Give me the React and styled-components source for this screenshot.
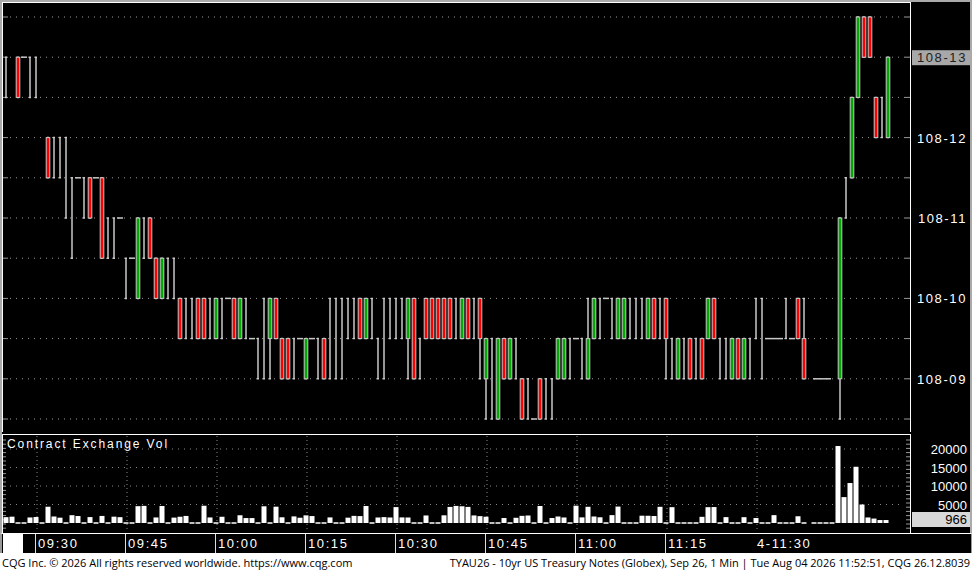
import React from "react";
import styled, { createGlobalStyle } from "styled-components";

const Global = createGlobalStyle`
  html, body { margin: 0; padding: 0; background: #fff; }
  body { width: 972px; height: 571px; overflow: hidden; font-family: "Liberation Sans", Arial, sans-serif; }
`;

const Frame = styled.div`
  width: 972px;
  height: 571px;
  display: flex;
  flex-direction: column;
`;

const Panel = styled.svg`
  display: block;
  flex: none;
`;

const TimeRow = styled.div`
  height: 20px;
  background: #000;
  display: flex;
  align-items: stretch;
  border-left: 2px solid #999;
  border-right: 1px solid #999;
  border-top: 1px solid #fff;
  box-sizing: border-box;
`;

const Square = styled.div`
  width: 20px;
  margin-left: 1px;
  background: #fff;
`;

const Spacer = styled.div`
  width: ${(p) => p.w}px;
`;

const TimeCell = styled.div`
  width: 90px;
  box-sizing: border-box;
  border-left: ${(p) => (p.plain ? "none" : "1px solid #ddd")};
  padding-left: 2px;
  color: #fff;
  font-size: 13px;
  letter-spacing: 1.6px;
  line-height: 20px;
`;

const Footer = styled.div`
  flex: 1;
  display: flex;
  justify-content: space-between;
  align-items: center;
  padding: 0 2px 0 2px;
  font-family: "Open Sans", "Liberation Sans", sans-serif;
  font-size: 11px;
  color: #000;
`;

const Y = (L) => 17 + L * 40.2;
const GREY = "#c8c8c8";

// [x, wickTop, wickBot, type, bodyTop, bodyBot]
const B = [
  [6, 1, 2, "w"], [18, 1, 2, "r"], [24, 1, 1, "d"], [30, 1, 2, "w"], [36, 1, 2, "w"],
  [48, 3, 4, "r"], [54, 3, 4, "w"], [60, 3, 4, "w"], [66, 3, 5, "w"], [72, 4, 6, "w"],
  [78, 4, 4, "d"], [84, 4, 5, "w"], [90, 4, 5, "r"], [96, 4, 4, "d"], [102, 4, 6, "r"],
  [108, 5, 6, "w"], [114, 5, 6, "w"], [120, 5, 5, "d"], [126, 6, 7, "w"], [132, 6, 6, "d"],
  [138, 5, 7, "g"], [144, 5, 6, "w"], [150, 5, 6, "r"], [156, 6, 7, "r"], [162, 6, 7, "g"],
  [168, 6, 7, "w"], [174, 6, 7, "w"], [180, 7, 8, "r"], [186, 7, 8, "w"], [192, 7, 8, "w"],
  [198, 7, 8, "r"], [204, 7, 8, "r"], [210, 7, 8, "w"], [216, 7, 8, "g"], [222, 7, 8, "w"],
  [228, 7, 7, "d"], [234, 7, 8, "r"], [240, 7, 8, "g"], [246, 7, 8, "w"], [252, 8, 8, "d"],
  [258, 8, 9, "w"], [264, 7, 9, "w"], [270, 7, 9, "g", 7, 8], [276, 7, 8, "r"], [282, 8, 9, "r"],
  [288, 8, 9, "r"], [294, 8, 9, "w"], [300, 8, 8, "d"], [306, 8, 9, "g"], [312, 8, 8, "d"],
  [318, 8, 9, "w"], [324, 8, 9, "r"], [330, 7, 9, "w"], [336, 7, 9, "w"], [342, 7, 9, "w"],
  [348, 7, 8, "w"], [354, 7, 8, "w"], [360, 7, 8, "r"], [366, 7, 8, "g"], [372, 7, 8, "w"],
  [378, 8, 9, "w"], [384, 7, 9, "w"], [390, 7, 8, "w"], [396, 7, 8, "w"], [402, 7, 8, "w"],
  [408, 7, 9, "g", 7, 8], [414, 7, 9, "r"], [420, 8, 9, "w"], [426, 7, 8, "r"], [432, 7, 8, "r"],
  [438, 7, 8, "r"], [444, 7, 8, "r"], [450, 7, 8, "r"], [456, 7, 8, "w"], [462, 7, 8, "g"],
  [468, 7, 8, "r"], [474, 7, 8, "w"], [480, 7, 9, "r", 7, 8], [486, 8, 10, "g", 8, 9], [492, 8, 10, "w"],
  [498, 8, 10, "g"], [504, 8, 9, "r"], [510, 8, 9, "g"], [516, 8, 9, "w"], [522, 9, 10, "r"],
  [528, 9, 10, "w"], [534, 10, 10, "d"], [540, 9, 10, "r"], [546, 9, 10, "w"], [552, 9, 10, "w"],
  [558, 8, 9, "g"], [564, 8, 9, "g"], [570, 8, 9, "w"], [576, 8, 8, "d"], [582, 8, 9, "w"],
  [588, 7, 9, "g", 8, 9], [594, 7, 8, "g"], [600, 7, 8, "w"], [606, 7, 7, "d"], [612, 7, 8, "w"],
  [618, 7, 8, "g"], [624, 7, 8, "g"], [630, 7, 8, "w"], [636, 7, 8, "w"], [642, 7, 8, "w"],
  [648, 7, 8, "g"], [654, 7, 8, "r"], [660, 7, 8, "w"], [666, 7, 9, "r", 7, 8], [672, 8, 9, "w"],
  [678, 8, 9, "g"], [684, 8, 9, "w"], [690, 8, 9, "r"], [696, 8, 9, "w"], [702, 8, 9, "r"],
  [708, 7, 8, "g"], [714, 7, 8, "r"], [720, 8, 9, "w"], [726, 8, 9, "w"], [732, 8, 9, "g"],
  [738, 8, 9, "r"], [744, 8, 9, "g"], [750, 8, 9, "w"], [756, 7, 8, "w"], [762, 7, 9, "w"],
  [768, 8, 8, "d"], [774, 8, 8, "d"], [780, 8, 8, "d"], [786, 7, 8, "w"], [792, 8, 8, "d"],
  [798, 7, 8, "r"], [804, 7, 9, "r", 8, 9], [816, 9, 9, "d"], [822, 9, 9, "d"], [828, 9, 9, "d"],
  [840, 5, 10, "g", 5, 9], [846, 4, 5, "w"], [852, 2, 4, "g"], [858, 0, 2, "g"], [864, 0, 1, "r"],
  [870, 0, 1, "r"], [876, 2, 3, "r"], [882, 2, 3, "w"], [888, 1, 3, "g"],
];

const bigVol = { 838: 20800, 844: 7000, 850: 10800, 856: 15200, 862: 5000, 868: 1500, 874: 1200, 880: 800, 886: 800 };
const vols = [];
let seed = 7;
for (let x = 6; x <= 808; x += 6) {
  seed = (seed * 9301 + 49297) % 233280;
  const r = seed / 233280;
  vols.push([x, r < 0.35 ? 250 : r < 0.8 ? 700 + r * 1800 : 2200 + r * 2500]);
}
[814, 820, 826, 832].forEach((x) => vols.push([x, 250]));
Object.entries(bigVol).forEach(([x, v]) => vols.push([+x, v]));

const dotted = "1 5";

function Bar({ b }) {
  const [x, t, bo, type, bt = t, bb = bo] = b;
  if (type === "d") return <line x1={x - 3} x2={x + 3} y1={Y(t)} y2={Y(t)} stroke={GREY} strokeWidth="1.5" />;
  const wick = (
    <g stroke={GREY} strokeWidth="1.5">
      <line x1={x} x2={x} y1={Y(t)} y2={Y(bo)} />
      <line x1={x - 1} x2={x + 1} y1={Y(t)} y2={Y(t)} />
      <line x1={x - 1} x2={x + 1} y1={Y(bo)} y2={Y(bo)} />
    </g>
  );
  if (type === "w") return wick;
  return (
    <g>
      {wick}
      <rect x={x - 1.8} y={Y(bt)} width="3.6" height={Y(bb) - Y(bt)} fill={type === "r" ? "#f00" : "#0a0"} stroke={GREY} strokeWidth="1" />
    </g>
  );
}

function PricePanel() {
  const levels = Array.from({ length: 11 }, (_, i) => i);
  const labels = [["108-12", 3], ["108-11", 5], ["108-10", 7], ["108-09", 9]];
  return (
    <Panel width="972" height="432">
      <rect width="972" height="432" fill="#000" />
      <rect width="972" height="2" fill="#aaa" />
      <rect width="2" height="432" fill="#aaa" />
      <rect x="970" width="2" height="432" fill="#aaa" />
      <line x1="2" x2="910" y1="2.5" y2="2.5" stroke="#fff" />
      <line x1="2.5" x2="2.5" y1="2" y2="432" stroke="#fff" />
      <line x1="910.5" x2="910.5" y1="2" y2="432" stroke="#fff" />
      {levels.map((L) => (
        <g key={L} stroke="#999">
          <line x1="3" x2="8" y1={Y(L)} y2={Y(L)} />
          <line x1="10" x2="903" y1={Y(L)} y2={Y(L)} strokeDasharray={dotted} />
          <line x1="904" x2="910" y1={Y(L)} y2={Y(L)} />
        </g>
      ))}
      {B.map((b, i) => <Bar key={i} b={b} />)}
      <rect x="912" y={Y(1) - 7} width="58" height="15" fill="#a8a8a8" />
      <text x="967" y={Y(1) + 5} textAnchor="end" fontSize="13" fill="#202020" letterSpacing="1.6" fontFamily="Liberation Sans">108-13</text>
      {labels.map(([t, L]) => (
        <text key={t} x="967" y={Y(L) + 5} textAnchor="end" fontSize="13" fill="#fff" letterSpacing="1.6" fontFamily="Liberation Sans">{t}</text>
      ))}
    </Panel>
  );
}

function VolumePanel() {
  const vy = (v) => 91 - (v / 5000) * 18.5;
  const times = [37, 127, 217, 307, 397, 487, 577, 667, 757];
  return (
    <Panel width="972" height="101">
      <rect width="972" height="101" fill="#000" />
      <rect width="2" height="101" fill="#aaa" />
      <rect x="970" width="2" height="101" fill="#aaa" />
      <line x1="2" x2="911" y1="2.5" y2="2.5" stroke="#fff" />
      <line x1="2.5" x2="2.5" y1="2" y2="101" stroke="#fff" />
      <line x1="910.5" x2="910.5" y1="2" y2="101" stroke="#fff" />
      {[5000, 10000, 15000, 20000].map((v) => (
        <line key={v} x1="10" x2="903" y1={vy(v)} y2={vy(v)} stroke="#888" strokeDasharray={dotted} />
      ))}
      {times.map((x) => (
        <line key={x} x1={x} x2={x} y1="4" y2="100" stroke="#888" strokeDasharray="1 3" />
      ))}
      {Array.from({ length: 22 }, (_, i) => (
        <g key={i} stroke="#999">
          <line x1="3" x2="6" y1={8 + i * 4.2} y2={8 + i * 4.2} />
          <line x1="906" x2="910" y1={8 + i * 4.2} y2={8 + i * 4.2} />
        </g>
      ))}
      {vols.map(([x, v]) =>
        v <= 300 ? (
          <line key={x} x1={x - 2.5} x2={x + 2.5} y1="91" y2="91" stroke="#fff" strokeWidth="1.5" />
        ) : (
          <rect key={x} x={x - 2.5} y={vy(v)} width="5" height={91 - vy(v)} fill="#fff" />
        )
      )}
      <text x="7" y="16" fontSize="12" fill="#fff" letterSpacing="1.9" fontFamily="Liberation Sans">Contract Exchange Vol</text>
      {[20000, 15000, 10000, 5000].map((v) => (
        <text key={v} x="967" y={vy(v) + 5} textAnchor="end" fontSize="13" fill="#fff" fontFamily="Liberation Sans">{v}</text>
      ))}
      <rect x="912" y="80" width="58" height="15" fill="#d8d8d8" />
      <text x="967" y="92" textAnchor="end" fontSize="13" fill="#000" fontFamily="Liberation Sans">966</text>
    </Panel>
  );
}

export default function App() {
  const labels = ["09:30", "09:45", "10:00", "10:15", "10:30", "10:45", "11:00", "11:15"];
  return (
    <Frame>
      <Global />
      <PricePanel />
      <VolumePanel />
      <TimeRow>
        <Square />
        <Spacer w={12} />
        {labels.map((l) => (
          <TimeCell key={l}>{l}</TimeCell>
        ))}
        <TimeCell plain>4-11:30</TimeCell>
      </TimeRow>
      <Footer>
        <span>CQG Inc. © 2026 All rights reserved worldwide. https://www.cqg.com</span>
        <span>TYAU26 - 10yr US Treasury Notes (Globex), Sep 26, 1 Min | Tue Aug 04 2026 11:52:51, CQG 26.12.8039</span>
      </Footer>
    </Frame>
  );
}
